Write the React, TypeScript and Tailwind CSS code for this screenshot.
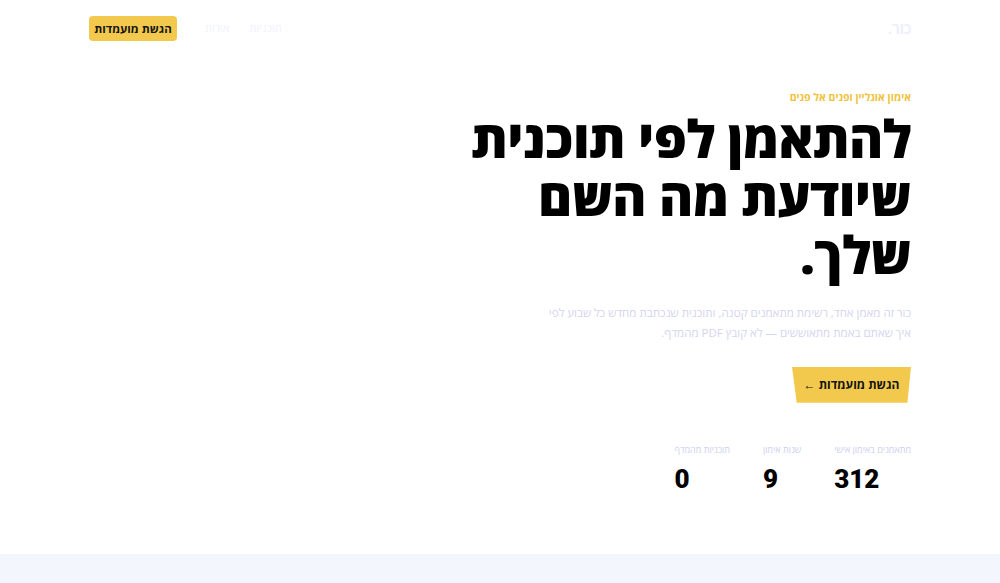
const stats = [
  { label: "מתאמנים באימון אישי", value: "312" },
  { label: "שנות אימון", value: "9" },
  { label: "תוכניות מהמדף", value: "0" },
];

const App = (): JSX.Element => (
  <div
    dir="rtl"
    className="min-h-screen bg-white text-black font-['Open_Sans','Liberation_Sans','DejaVu_Sans',sans-serif]"
  >
    <header className="flex items-center justify-between px-[89px] pt-4 pb-4">
      <a href="#" className="text-[15px] font-bold text-[#eef0fb] tracking-tight">
        כור.
      </a>
      <nav className="flex items-center gap-5">
        <a href="#" className="text-[11px] text-[#f1f2fb]">
          תוכניות
        </a>
        <a href="#" className="text-[11px] text-[#f1f2fb]">
          אודות
        </a>
        <a
          href="#"
          className="mr-2 flex h-[25px] w-[88px] items-center justify-center rounded-sm bg-[#f2c94c] text-[11.5px] font-bold text-[#141414]"
        >
          הגשת מועמדות
        </a>
      </nav>
    </header>

    <main className="px-[89px] pt-[33px] pb-[59px]">
      <section className="flex flex-col items-start">
        <p className="text-[10.5px] font-bold text-[#f0c23d]">אימון אונליין ופנים אל פנים</p>
        <h1 className="mt-[3px] text-[52px] font-extrabold leading-[58px] tracking-[-0.5px]">
          להתאמן לפי תוכנית
          <br />
          שיודעת מה השם
          <br />
          שלך.
        </h1>
        <p className="mt-[20px] max-w-[372px] text-[11.5px] leading-[20px] text-[#d3d5ee]">
          כור זה מאמן אחד, רשימת מתאמנים קטנה, ותוכנית שנכתבת מחדש כל שבוע לפי איך שאתם באמת
          מתאוששים — לא קובץ PDF מהמדף.
        </p>
        <a
          href="#"
          className="mt-[24px] flex h-[36px] w-[119px] items-center justify-center bg-[#f2c94c] text-[12px] font-bold text-[#141414] [clip-path:polygon(0_0,100%_0,97%_100%,4%_100%)]"
        >
          הגשת מועמדות ←
        </a>
        <div className="mt-[40px] flex gap-[33px]">
          {stats.map((s) => (
            <div key={s.label} className="flex flex-col">
              <span className="text-[9px] text-[#ccd0ee]">{s.label}</span>
              <span
                dir="ltr"
                className="mt-[7px] text-left text-[26px] font-black leading-[32px] font-['Roboto','Liberation_Sans',sans-serif]"
              >
                {s.value}
              </span>
            </div>
          ))}
        </div>
      </section>
    </main>

    <section className="h-[200px] bg-[#f4f6fe]" />
  </div>
);

export default App;
